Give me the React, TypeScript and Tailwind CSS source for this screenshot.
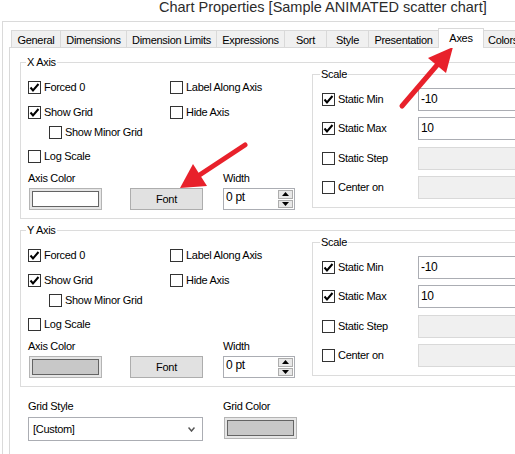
import React from 'react';

const tabs = [
  { label: 'General', w: 'w-[50px]' },
  { label: 'Dimensions', w: 'w-[67px]' },
  { label: 'Dimension Limits', w: 'w-[91px]' },
  { label: 'Expressions', w: 'w-[69px]' },
  { label: 'Sort', w: 'w-[43px]' },
  { label: 'Style', w: 'w-[43px]' },
  { label: 'Presentation', w: 'w-[71px]' },
  { label: 'Axes', w: 'w-[46px]', active: true },
  { label: 'Colors', w: 'w-[44px]', left: true },
];

function Check({ label, checked = false, className = '' }: { label: string; checked?: boolean; className?: string }) {
  return (
    <div className={`flex h-[13px] items-center ${className}`}>
      <span className="flex h-[13px] w-[13px] shrink-0 items-center justify-center border border-[#333] bg-white">
        {checked && (
          <svg width="11" height="11" viewBox="0 0 11 11">
            <path d="M1.5 5.5 L4 8.5 L9.5 2" fill="none" stroke="#000" strokeWidth="2" />
          </svg>
        )}
      </span>
      <span className="ml-[3px] leading-[13px]">{label}</span>
    </div>
  );
}

function Group({ label, labelMargin, className = '', children }: { label: string; labelMargin: string; className?: string; children: React.ReactNode }) {
  return (
    <div className={`border border-[#dcdcdc] ${className}`}>
      <div className={`-mt-[7px] w-fit bg-white px-[1px] leading-[13px] ${labelMargin}`}>{label}</div>
      {children}
    </div>
  );
}

function Swatch({ fill, className = '' }: { fill: string; className?: string }) {
  return (
    <div className={`h-[22px] w-[73px] border border-[#b4b4b4] bg-[#e6e6e6] p-[2px] ${className}`}>
      <div className={`h-full w-full border border-[#646464] ${fill}`} />
    </div>
  );
}

function Spinner() {
  return (
    <div className="ml-[20px] flex h-[22px] w-[72px] border border-[#abadb3] bg-white">
      <span className="flex-1 pl-[2px] pt-[1px] text-[12px] leading-[14px]">0 pt</span>
      <div className="my-px mr-px flex w-[15px] flex-col gap-px">
        <span className="flex flex-1 items-center justify-center border border-[#adadad] bg-[#e8e8e8]">
          <svg width="7" height="4" viewBox="0 0 7 4">
            <path d="M0 4 L3.5 0 L7 4Z" fill="#000" />
          </svg>
        </span>
        <span className="flex flex-1 items-center justify-center border border-[#adadad] bg-[#e8e8e8]">
          <svg width="7" height="4" viewBox="0 0 7 4">
            <path d="M0 0 L3.5 4 L7 0Z" fill="#000" />
          </svg>
        </span>
      </div>
    </div>
  );
}

function ScaleRow({ label, value, checked = false, className = '' }: { label: string; value?: string; checked?: boolean; className?: string }) {
  const enabled = value !== undefined;
  return (
    <div className={`flex h-[23px] items-center pl-[9px] ${className}`}>
      <Check label={label} checked={checked} className="w-[96px]" />
      <div
        className={`h-full w-[150px] border pl-[2px] pt-[3px] text-[12px] leading-[14px] ${
          enabled ? 'border-[#abadb3] bg-white' : 'border-[#d9d9d9] bg-[#f0f0f0]'
        }`}
      >
        {value}
      </div>
    </div>
  );
}

function AxisGroup({ label, fill, className = '' }: { label: string; fill: string; className?: string }) {
  return (
    <Group label={label} labelMargin="ml-[5px]" className={`ml-[10px] w-[620px] pb-[8px] ${className}`}>
      <div className="flex">
        <div className="w-[291px] pl-[7px]">
          <div className="mt-[12px] flex">
            <Check label="Forced 0" checked className="w-[142px]" />
            <Check label="Label Along Axis" />
          </div>
          <div className="mt-[12px] flex">
            <Check label="Show Grid" checked className="w-[142px]" />
            <Check label="Hide Axis" />
          </div>
          <Check label="Show Minor Grid" className="mt-[7px] pl-[21px]" />
          <Check label="Log Scale" className="mt-[11px]" />
          <div className="mt-[9px] flex leading-[13px]">
            <span className="w-[195px]">Axis Color</span>
            <span>Width</span>
          </div>
          <div className="mt-[3px] flex">
            <Swatch fill={fill} className="ml-[1px]" />
            <button className="ml-[28px] h-[22px] w-[73px] border border-[#adadad] bg-[#e1e1e1] leading-[13px]">Font</button>
            <Spinner />
          </div>
        </div>
        <Group label="Scale" labelMargin="ml-[7px]" className="mt-[5px] w-[300px] self-start pb-[8px]">
          <ScaleRow label="Static Min" value="-10" checked className="mt-[7px]" />
          <ScaleRow label="Static Max" value="10" checked className="mt-[6px]" />
          <ScaleRow label="Static Step" className="mt-[7px]" />
          <ScaleRow label="Center on" className="mt-[6px]" />
        </Group>
      </div>
    </Group>
  );
}

export default function App() {
  return (
    <div className="relative h-[454px] w-[515px] overflow-hidden bg-white font-['Liberation_Sans',Arial,sans-serif] text-[11px] tracking-[-0.3px] text-black">
      <div className="h-[21px] whitespace-nowrap pl-[159px] text-[14.5px] leading-[14px] tracking-normal text-[#2b2b2b]">
        Chart Properties [Sample ANIMATED scatter chart]
      </div>
      <div className="ml-[2px] h-[433px] w-[700px] border-l border-t border-[#dadada] pl-[6px] pt-[6px]">
        <div className="flex h-[19px] items-end pl-[2px]">
          {tabs.map((t, i) =>
            t.active ? (
              <div
                key={t.label}
                className={`relative z-10 -mb-px h-[20px] ${t.w} -ml-px shrink-0 border border-b-0 border-[#d9d9d9] bg-white pt-[3px] text-center leading-[13px]`}
              >
                {t.label}
              </div>
            ) : (
              <div
                key={t.label}
                className={`h-[17px] ${t.w} ${i > 0 ? '-ml-px' : ''} ${
                  t.left ? 'pl-[4px] text-left' : 'text-center'
                } shrink-0 whitespace-nowrap border border-b-0 border-[#d9d9d9] bg-[#f0f0f0] pt-[3px] leading-[13px]`}
              >
                {t.label}
              </div>
            )
          )}
        </div>
        <div className="h-[420px] border-l border-t border-[#d9d9d9] bg-white">
          <AxisGroup label="X Axis" fill="bg-white" className="mt-[14px]" />
          <AxisGroup label="Y Axis" fill="bg-[#c8c8c8]" className="mt-[11px]" />
          <div className="mt-[13px] flex pl-[18px]">
            <div className="w-[195px]">
              <div className="leading-[13px]">Grid Style</div>
              <div className="mt-[4px] flex h-[24px] w-[175px] items-center justify-between border border-[#abadb3] bg-white pl-[4px] pr-[7px]">
                <span className="leading-[13px]">[Custom]</span>
                <svg width="7" height="5" viewBox="0 0 7 5">
                  <path d="M0.5 0.5 L3.5 4 L6.5 0.5" fill="none" stroke="#555" strokeWidth="1.5" />
                </svg>
              </div>
            </div>
            <div>
              <div className="leading-[13px]">Grid Color</div>
              <Swatch fill="bg-[#c8c8c8]" className="ml-[1px] mt-[4px]" />
            </div>
          </div>
        </div>
      </div>
      <svg className="pointer-events-none absolute left-0 top-0" width="515" height="454" viewBox="0 0 515 454">
        <line x1="402" y1="106" x2="438" y2="64" stroke="#e8212b" strokeWidth="5" strokeLinecap="round" />
        <polygon points="453,47 446,73 428,58" fill="#e8212b" />
        <line x1="245" y1="145" x2="198" y2="176" stroke="#e8212b" strokeWidth="5" strokeLinecap="round" />
        <polygon points="180,188 193,164 207,186" fill="#e8212b" />
      </svg>
    </div>
  );
}
